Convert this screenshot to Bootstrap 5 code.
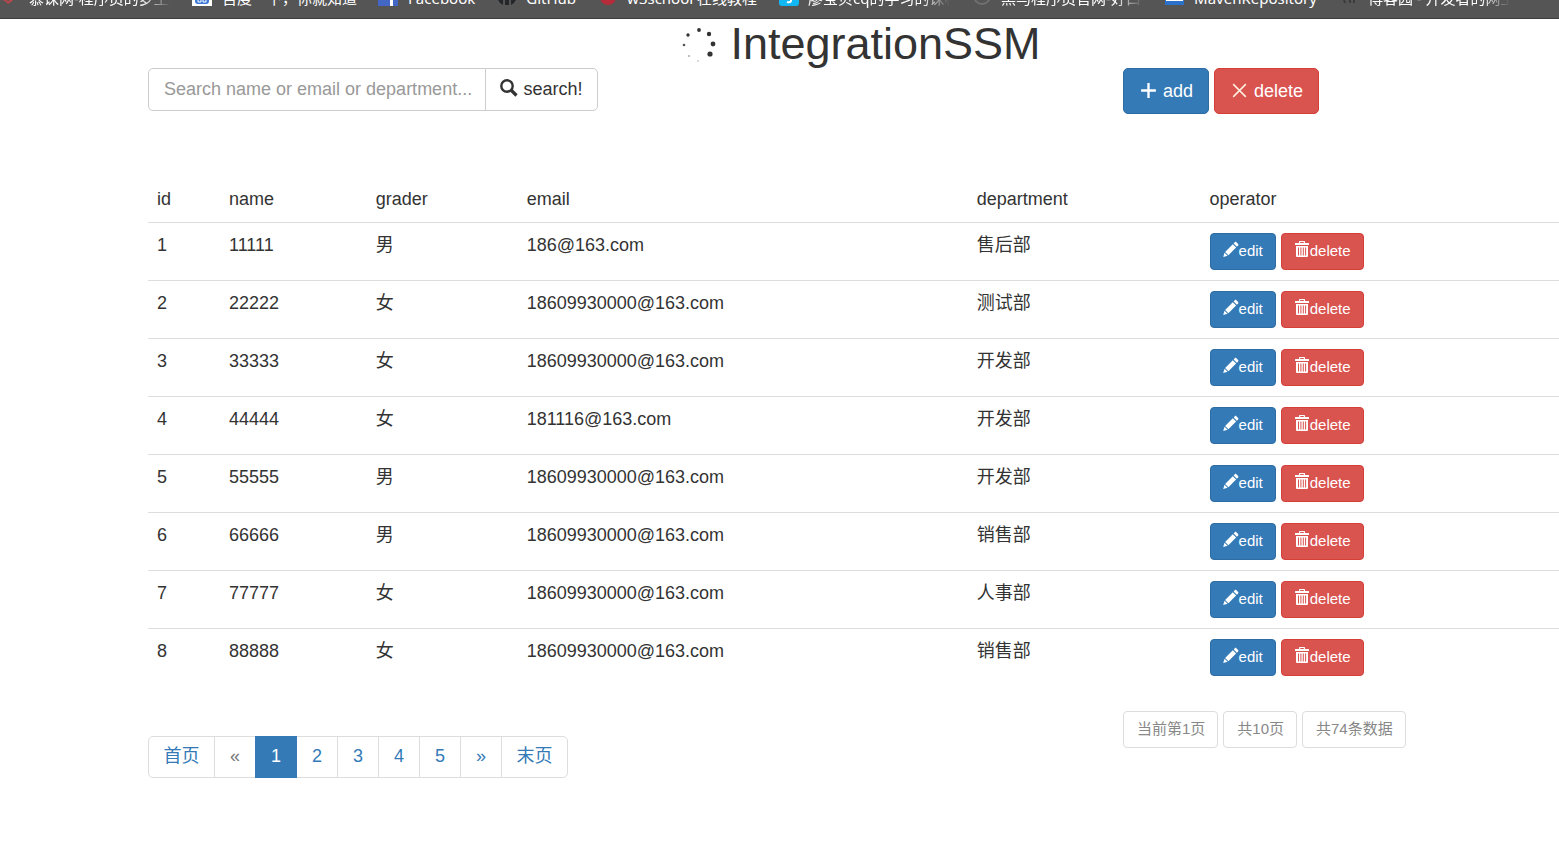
<!DOCTYPE html>
<html lang="zh-CN">
<head>
<meta charset="utf-8">
<meta name="viewport" content="width=device-width, initial-scale=1">
<title>IntegrationSSM</title>
<link href="https://cdn.jsdelivr.net/npm/bootstrap@5.3.0/dist/css/bootstrap.min.css" rel="stylesheet">
<style>
  :root { --blue: #337ab7; --blue-edge: #2e6da4; --red: #d9534f; --red-edge: #d43f3a; --rule: #ddd; }
  body { font-family: "Liberation Sans", "Noto Sans CJK SC", sans-serif; font-size: 18px; line-height: 25px; color: #333; overflow-x: hidden; }

  .bookmarks { height: 19px; padding-bottom: 10px; gap: 22px; background: #555; border-bottom: 1px solid #3c3c3c; font: 15px/20px "Noto Sans", "Noto Sans CJK SC", sans-serif; }
  .bookmarks a { color: #fff; gap: 9px; }
  .bookmarks svg { width: 20px; height: 20px; overflow: visible; }
  .bookmarks .clip { width: 142px; overflow: hidden; -webkit-mask-image: linear-gradient(90deg, #000 80%, transparent); mask-image: linear-gradient(90deg, #000 80%, transparent); }

  main { padding-left: 148px; }
  .title { font-size: 45px; line-height: 49px; font-weight: 400; gap: 14px; padding-left: 14px; }
  .wide-side { width: 69.1%; }

  .search-box { width: 450px; }
  .search-box .form-control { height: 43px; padding: 9px 10px 9px 15px; font-size: 18px; line-height: 23px; border-color: #ccc; border-radius: 5px; color: #555; }
  .search-box .form-control::placeholder { color: #999; }
  .search-box .btn { width: 113px; padding: 0; font-size: 18px; border-color: #ccc; color: #333; background: #fff; border-radius: 5px; }
  .search-box svg { width: 18px; height: 18px; vertical-align: -2px; }

  .btn-blue { background: var(--blue); border-color: var(--blue-edge); color: #fff; }
  .btn-red { background: var(--red); border-color: var(--red-edge); color: #fff; }
  .btn-blue:hover { background: #286090; color: #fff; }
  .btn-red:hover { background: #c9302c; color: #fff; }
  .tools { gap: 5px; }
  .tools .btn { height: 46px; padding: 0 15px; font-size: 18px; border-radius: 5px; }
  .tools svg { width: 19px; height: 19px; vertical-align: -3px; }

  .people { table-layout: fixed; margin: 63px 0 25px; color: #333; --bs-table-bg: transparent; --bs-table-color: #333; }
  .people > :not(caption) > * > * { padding: 10px 9px; border: 0; border-top: 1px solid var(--rule); font-weight: 400; }
  .people > thead > tr > th { border-top: 0; }
  .people .c-id { width: 5.1%; }
  .people .c-name { width: 10.4%; }
  .people .c-grader { width: 10.7%; }
  .people .c-email { width: 31.9%; }
  .people .c-dept { width: 16.5%; }
  .row-tools { gap: 5px; }
  .row-tools .btn { height: 37px; padding: 0 12px 2px; font-size: 15px; line-height: 22px; border-radius: 4px; }
  .row-tools svg { width: 16px; height: 16px; vertical-align: -1px; }

  .pager { padding-top: 25px; }
  .pager .pagination { --bs-pagination-color: var(--blue); --bs-pagination-border-color: #ddd; --bs-pagination-active-bg: var(--blue); --bs-pagination-active-border-color: var(--blue); --bs-pagination-border-radius: 5px; --bs-pagination-disabled-color: #777; --bs-pagination-disabled-bg: #fff; --bs-pagination-disabled-border-color: #ddd; }
  .pager .page-link { width: 42px; height: 42px; padding: 7px 0; font-size: 18px; line-height: 25px; text-align: center; }
  .pager .edge .page-link { width: 67px; }
  .totals { gap: 5px; }
  .totals .btn { height: 37px; padding: 0 12px 2px 13px; font-size: 15px; line-height: 22px; border: 1px solid #ddd; border-radius: 4px; color: #888; opacity: 1; white-space: nowrap; background: #fff; }
</style>
</head>
<body>
<svg class="d-none" aria-hidden="true">
  <symbol id="i-pencil" viewBox="0 0 16 16"><path fill="currentColor" d="M11.8 1.200c.5-.5 1.100-.5 1.600 0l1.700 1.700c.5.500.5 1.100 0 1.600l-1.200 1.200-3.300-3.300zM9.800 3.200l3.300 3.300-7.700 7.700-3.300-3.300zM1.500 11.700l3.100 3.100L.2 16z"/></symbol>
  <symbol id="i-trash" viewBox="0 0 16 16"><path fill="currentColor" fill-rule="evenodd" d="M5 2V.8Q5 0 5.800 0h4.400Q11 0 11 .8V2h3.500q.5 0 .5.500V4H1V2.500Q1 2 1.500 2zM6.200 2h3.600V1H6.200zM2 5h12v10q0 1-1 1H3q-1 0-1-1zm2 1.500v8h1v-8zm2.400 0v8h1v-8zm2.400 0v8h1v-8zm2.300 0v8h1v-8z"/></symbol>
</svg>

<nav class="bookmarks d-flex align-items-end overflow-hidden text-nowrap" aria-label="书签">
  <a href="#" class="d-flex flex-shrink-0 text-decoration-none"><svg viewBox="0 0 20 20"><path d="M2 8h12v3l-3 3-3 2-3-3-3-1z" fill="#b9474a"/><path d="M6 10l4 1-2 3z" fill="#555"/></svg><span class="clip">慕课网-程序员的梦工厂</span></a>
  <a href="#" class="d-flex flex-shrink-0 text-decoration-none"><svg viewBox="0 0 20 20"><path fill="#fff" d="M-1 0h20v18H-1z"/><path d="M2 10q0-3 3-3h8q3 0 3 3v3q0 3-3 3H5q-3 0-3-3z" fill="#3b78d8"/><path d="M8 11H5v3h3v-3M10 11v3h3v-3" fill="none" stroke="#fff"/></svg><span>百度一下，你就知道</span></a>
  <a href="#" class="d-flex flex-shrink-0 text-decoration-none"><svg viewBox="0 0 20 20"><path fill="#4267c5" d="M-1 0h20v18H-1z"/><path fill="#fff" d="M11 4h3v14h-3z"/></svg><span>Facebook</span></a>
  <a href="#" class="d-flex flex-shrink-0 text-decoration-none"><svg viewBox="0 0 20 20"><path fill="#24272a" d="M10-2a10 10 0 0 1 4 19v-4q0-2-2-3H8q-2 1-2 3v4A10 10 0 0 1 10-2"/><path fill="#24272a" d="M8 12h4v5H8z"/></svg><span>GitHub</span></a>
  <a href="#" class="d-flex flex-shrink-0 text-decoration-none"><svg viewBox="0 0 20 20"><circle cx="10" cy="9" r="8" fill="#b52d3b"/></svg><span>w3school 在线教程</span></a>
  <a href="#" class="d-flex flex-shrink-0 text-decoration-none"><svg viewBox="0 0 20 20"><rect y="-2" width="20" height="20" rx="3" fill="#12b7f5"/><path d="M12 6v7q-1 2-4 1" fill="none" stroke="#fff" stroke-width="2"/></svg><span class="clip">廖宝贝cq的学习的课程表</span></a>
  <a href="#" class="d-flex flex-shrink-0 text-decoration-none"><svg viewBox="0 0 20 20"><circle cx="10" cy="8" r="8" fill="none" stroke="#707070" stroke-width="2"/></svg><span class="clip">黑马程序员官网-好口碑</span></a>
  <a href="#" class="d-flex flex-shrink-0 text-decoration-none"><svg viewBox="0 0 20 20"><path fill="#2b70c9" d="M0 0h19v17H0z"/><path fill="#fff" d="M1 11h17v2H1z"/></svg><span>MavenRepository</span></a>
  <a href="#" class="d-flex flex-shrink-0 text-decoration-none"><svg viewBox="0 0 20 20"><path d="M3 5l3 10M7 8h4v7M15 5v10" fill="none" stroke="#3b3b3b" stroke-width="2"/></svg><span class="clip">博客园 - 开发者的网上家园</span></a>
</nav>

<main>
  <h1 class="title d-flex justify-content-center align-items-center m-0">
    <svg width="36" height="36" viewBox="0 0 36 36" fill="#333" aria-hidden="true"><circle cx="19" cy="4" r="1.900"/><circle cx="29" cy="8" r="2.200"/><circle cx="33" cy="18" r="2.400"/><circle cx="30" cy="28" r="2.600"/><circle cx="18" cy="35" r="1" fill="#ccc"/><circle cx="9" cy="30" r="1" fill="#aaa"/><circle cx="4" cy="19" r="1.300" fill="#555"/><circle cx="8" cy="9" r="1.700"/></svg>
    <span>IntegrationSSM</span>
  </h1>

  <div class="d-flex align-items-start">
    <div class="wide-side">
      <form class="search-box input-group" role="search">
        <input type="text" class="form-control" placeholder="Search name or email or department..." aria-label="Search name or email or department">
        <button type="button" class="btn"><svg viewBox="0 0 18 18" aria-hidden="true"><circle cx="7" cy="7" r="5.700" fill="none" stroke="currentColor" stroke-width="2.400"/><path d="M11 11l5.500 5.500" stroke="currentColor" stroke-width="3.200"/></svg> search!</button>
      </form>
    </div>
    <div class="tools d-flex">
      <button type="button" class="btn btn-blue"><svg viewBox="0 0 18 18" aria-hidden="true"><path d="M9 2v14M2 9h14" stroke="currentColor" stroke-width="2.200"/></svg> add</button>
      <button type="button" class="btn btn-red"><svg viewBox="0 0 18 18" aria-hidden="true"><path d="M3 3l12 12M15 3L3 15" stroke="#ffeede" stroke-width="1.500"/></svg> delete</button>
    </div>
  </div>

  <table class="people table align-top">
    <thead><tr><th class="c-id">id</th><th class="c-name">name</th><th class="c-grader">grader</th><th class="c-email">email</th><th class="c-dept">department</th><th>operator</th></tr></thead>
    <tbody id="rows"></tbody>
  </table>

  <div class="d-flex align-items-start">
    <nav class="pager wide-side" aria-label="分页">
      <ul class="pagination m-0">
        <li class="page-item edge"><a class="page-link" href="#">首页</a></li>
        <li class="page-item disabled"><a class="page-link" href="#">«</a></li>
        <li class="page-item active" aria-current="page"><a class="page-link" href="#">1</a></li>
        <li class="page-item"><a class="page-link" href="#">2</a></li>
        <li class="page-item"><a class="page-link" href="#">3</a></li>
        <li class="page-item"><a class="page-link" href="#">4</a></li>
        <li class="page-item"><a class="page-link" href="#">5</a></li>
        <li class="page-item"><a class="page-link" href="#">»</a></li>
        <li class="page-item edge"><a class="page-link" href="#">末页</a></li>
      </ul>
    </nav>
    <div class="totals d-flex">
      <button type="button" class="btn" disabled>当前第1页</button>
      <button type="button" class="btn" disabled>共10页</button>
      <button type="button" class="btn" disabled>共74条数据</button>
    </div>
  </div>
</main>

<script src="https://cdn.jsdelivr.net/npm/bootstrap@5.3.0/dist/js/bootstrap.bundle.min.js"></script>
<script>
  const people = [
    [1, '11111', '男', '186@163.com', '售后部'],
    [2, '22222', '女', '18609930000@163.com', '测试部'],
    [3, '33333', '女', '18609930000@163.com', '开发部'],
    [4, '44444', '女', '181116@163.com', '开发部'],
    [5, '55555', '男', '18609930000@163.com', '开发部'],
    [6, '66666', '男', '18609930000@163.com', '销售部'],
    [7, '77777', '女', '18609930000@163.com', '人事部'],
    [8, '88888', '女', '18609930000@163.com', '销售部']
  ];
  document.getElementById('rows').innerHTML = people.map(p =>
    '<tr>' + p.map(v => `<td>${v}</td>`).join('') +
    `<td><div class="row-tools d-flex">
      <button type="button" class="btn btn-blue"><svg aria-hidden="true"><use href="#i-pencil"/></svg>edit</button>
      <button type="button" class="btn btn-red"><svg aria-hidden="true"><use href="#i-trash"/></svg>delete</button>
    </div></td></tr>`).join('');
</script>
</body>
</html>
